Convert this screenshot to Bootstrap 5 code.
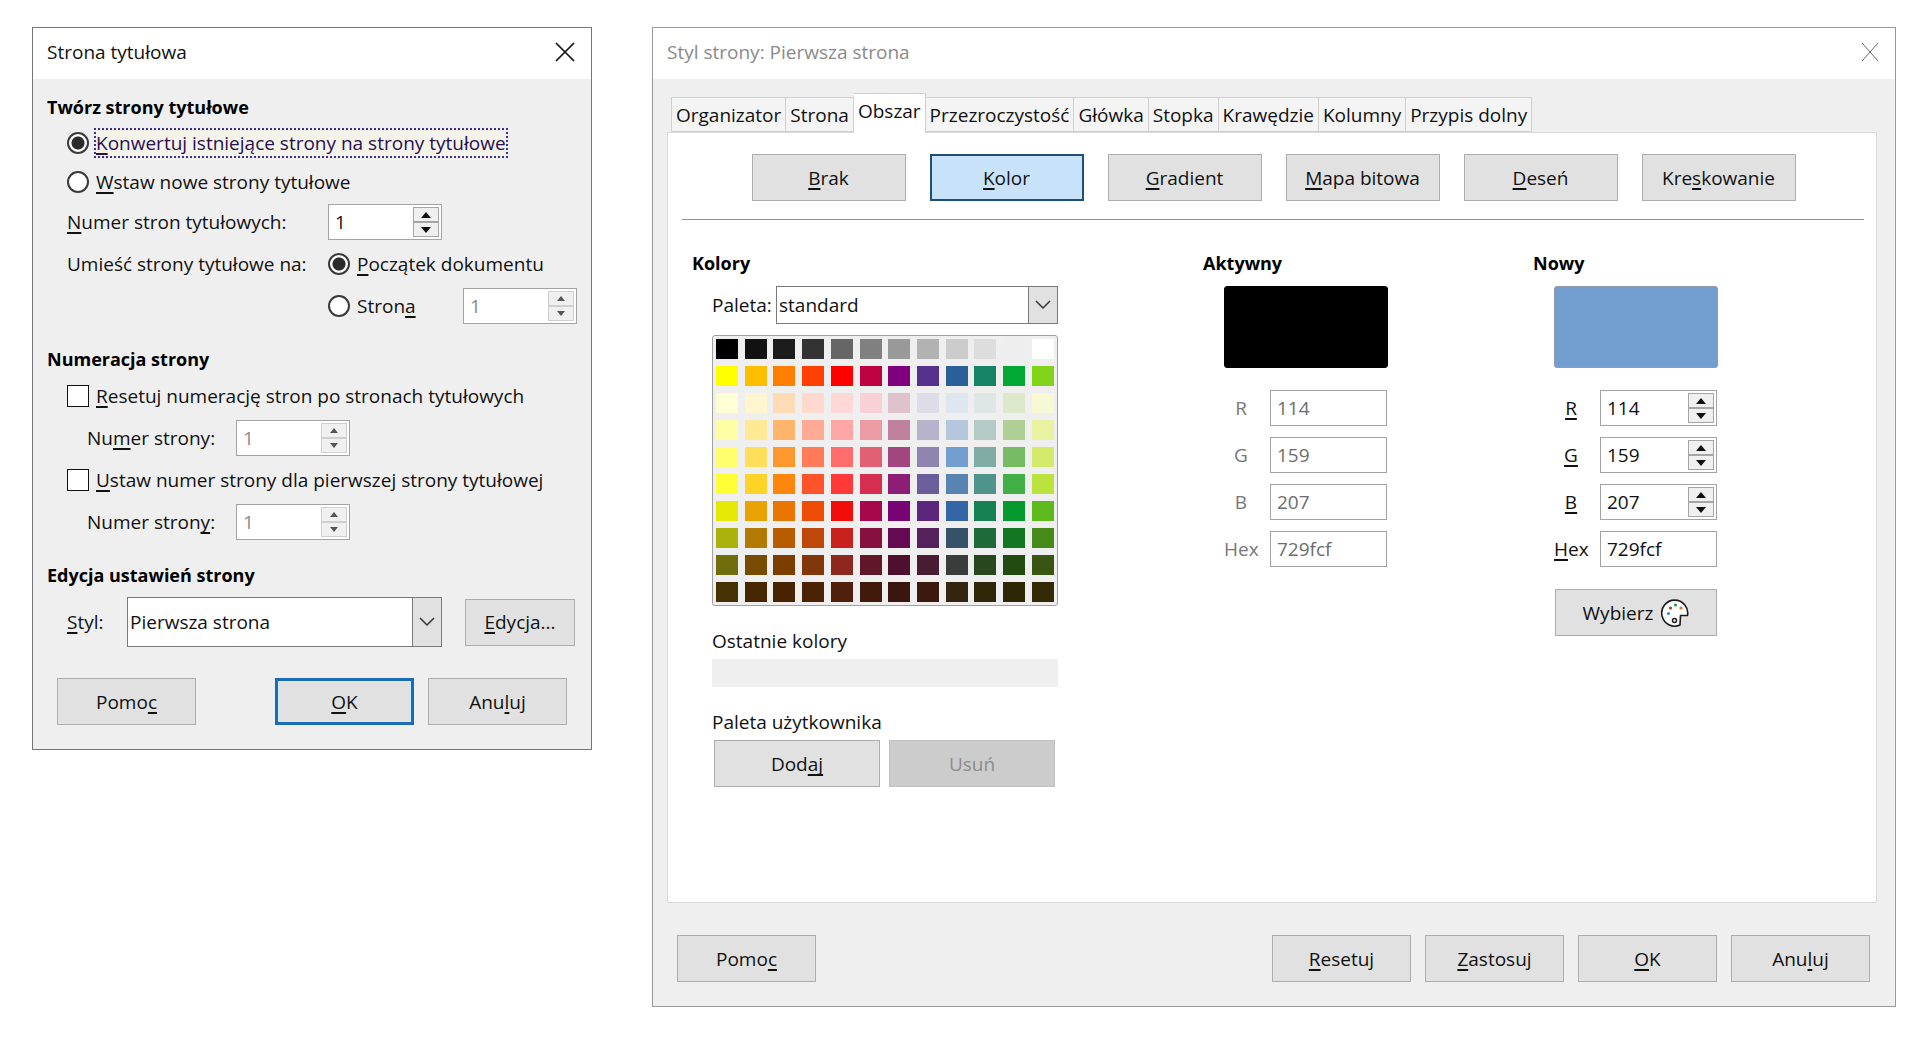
<!DOCTYPE html>
<html lang="pl">
<head>
<meta charset="utf-8">
<meta name="viewport" content="width=device-width, initial-scale=1">
<title>Strona tytułowa</title>
<link href="https://cdn.jsdelivr.net/npm/bootstrap@5.3.0/dist/css/bootstrap.min.css" rel="stylesheet">
<style>
body{background:#fff;color:#111;font-family:"Open Sans","Noto Sans",sans-serif;font-size:19px;line-height:24px}
.desk{padding:27px 24px 28px 32px;gap:60px}
.dlg{background:#efefef;border:1px solid #757575}
.dlg-main{width:560px;flex:none}
.dlg-wide{min-width:0;border-color:#999}
.dlg-title{background:#fff;height:51px;padding:0 16px 3px 14px}
.dlg-title h1{font-size:19px;line-height:24px;font-weight:400;margin:0}
.dlg-wide .dlg-title h1{color:#8a8a8a}
.x-btn{border:0;background:none;padding:0;display:flex;color:#111}
.dlg-wide .x-btn{color:#666}
.sect{font-size:18px;line-height:24px;font-weight:700;color:#000;margin:0}
.dlg-main .sect{line-height:32px}
u{text-decoration-thickness:2px;text-underline-offset:3px;text-decoration-skip-ink:none}
.area{padding:8px 14px 0}
.line{height:42px}
.line-s{height:39px}
.wbtn{height:47px;border:1px solid #adadad;background:#e1e1e1;color:#111;border-radius:0;padding:0;font-size:19px;line-height:24px}
.wbtn:hover{background:#e5f1fb}
.w-std{width:139px}
.w-kind{width:154px}
.w-half{width:166px}
.wbtn.is-default{border:3px solid #1a6cb4;box-shadow:inset 0 0 0 1px #cdeeff}
.wbtn.is-on{background:#c8e3f9;border:2px solid #1f4e79}
.wbtn:disabled{background:#cccccc;border-color:#c0c0c0;color:#8c8c8c;opacity:1}
.tick{appearance:none;width:22px;height:22px;border:1px solid #111;background:#fff;margin:0;flex:none}
.tick[type=radio]{border:2px solid #3a3a3a;border-radius:50%}
.tick[type=radio]:checked{background:radial-gradient(circle,#2b2b2b 0 6px,#fff 7px)}
.opt{gap:7px}
.opt label{line-height:26px}
.focused{outline:2px dotted #3f2f8f;outline-offset:0;background:#f3f3e9;color:#2a1050}
.place-l{width:261px;flex:none}
.spin{height:36px;width:114px;border:1px solid #a3a3a3;background:#fff;padding:2px}
.spin input,.txt{border:0;background:transparent;min-width:0;padding:0 0 0 4px;color:#111;outline:0}
.spin-keys{width:26px;flex:none}
.spin-keys button{flex:1;border:1px solid #a5a5a5;background:#f0f0f0;padding:0;display:flex;align-items:center;justify-content:center;color:#111}
.spin.off input{color:#8a8a8a}
.spin.off .spin-keys button{border-color:#cfcfcf;color:#555}
.txt{height:36px;border:1px solid #a3a3a3;background:#fff;padding-left:6px}
.txt:disabled{color:#6d6d6d}
.combo{position:relative;height:50px}
.combo select{appearance:none;width:100%;height:100%;border:1px solid #7a7a7a;border-radius:0;background:#fff;padding:0 34px 0 2px;color:#111;outline:0}
.combo span{position:absolute;right:0;top:0;bottom:0;width:30px;border:1px solid #7a7a7a;background:#e1e1e1;display:flex;align-items:center;justify-content:center;pointer-events:none}
.combo-low{height:38px}
.num{padding-left:20px}
.num label{width:149px}
.style-row{padding-top:6px}
.style-l{width:60px}
.edit-b{width:110px;margin:0 2px 0 23px}
.foot-main{padding:31px 24px 24px 24px;gap:14px}
.tabs{padding:14px 0 0 18px;height:53px}
.tabs a{height:35px;border:1px solid #cfcfcf;border-left-width:0;background:#f4f4f4;color:#111;text-decoration:none;padding:5px 4px 0 4px;white-space:nowrap}
.tabs a:first-child{border-left-width:1px}
.tabs a.is-open{height:40px;background:#fff;border-bottom:0;margin-bottom:-1px;position:relative}
.pane{margin:0 18px 0 14px;border:1px solid #dadada;background:#fff;height:771px}
.kinds{gap:24px;padding:21px 0 18px 3px}
.rule{margin:0 12px 0 14px;border:0;border-top:1px solid #909090;opacity:1}
.cols{padding:31px 158px 0 24px}
.col-pal{width:366px}
.col-rgb{width:185px}
.inset{padding-left:20px}
.pal-row{margin:11px 0}
.pal-row label{width:64px;flex:none}
.pal{border:1px solid #a0a0a0;border-radius:3px;background:#efefef;padding:3px;display:grid;grid-template-columns:repeat(12,22px);grid-auto-rows:20px;row-gap:7px;justify-content:space-between}
.pal button{border:0;padding:0}
.cap{margin:23px 0 6px}
.recent{height:28px;background:#efefef}
.pair{padding:0 3px 0 2px}
.stack{gap:11px;padding:11px 0 0 21px}
.sample{height:82px;border-radius:3px;border:1px solid #8f9bab;margin-bottom:11px}
.s-old{background:#000;border-color:#000}
.s-new{background:#729fcf}
.rgb{gap:12px}
.rgb label{width:34px;text-align:center;flex:none}
.rgb .spin,.rgb .txt{width:117px;flex:none}
.dim{color:#777}
.pick{margin:11px 1px 0}
.foot-wide{padding:32px 25px 24px 24px;gap:14px}
</style>
</head>
<body>
<main class="desk d-flex align-items-start">

<section class="dlg dlg-main">
  <header class="dlg-title d-flex align-items-center justify-content-between">
    <h1>Strona tytułowa</h1>
    <button class="x-btn" type="button" aria-label="Zamknij"><svg width="20" height="20" viewBox="0 0 20 20" fill="none" stroke="currentColor" stroke-width="1.7"><path d="M1 1l18 18M19 1L1 19"/></svg></button>
  </header>
  <form>
    <div class="area">
      <h2 class="sect mt-1">Twórz strony tytułowe</h2>
      <div class="ps-3 ms-1">
        <div class="line-s opt d-flex align-items-center"><input class="tick" type="radio" name="mode" id="m1" checked><label class="focused" for="m1"><u>K</u>onwertuj istniejące strony na strony tytułowe</label></div>
        <div class="line-s opt d-flex align-items-center"><input class="tick" type="radio" name="mode" id="m2"><label for="m2"><u>W</u>staw nowe strony tytułowe</label></div>
        <div class="line d-flex align-items-center"><label class="place-l" for="n1"><u>N</u>umer stron tytułowych:</label>
          <div class="spin d-flex"><input class="w-100" type="text" id="n1" value="1"><span class="spin-keys d-flex flex-column"><button type="button" aria-label="Więcej"><svg width="10" height="6"><path d="M0 6L5 0l5 6z" fill="currentColor"/></svg></button><button type="button" aria-label="Mniej"><svg width="10" height="6"><path d="M0 0L5 6l5-6z" fill="currentColor"/></svg></button></span></div></div>
        <div class="line d-flex align-items-center"><span class="place-l">Umieść strony tytułowe na:</span>
          <div class="opt d-flex align-items-center"><input class="tick" type="radio" name="where" id="w1" checked><label for="w1"><u>P</u>oczątek dokumentu</label></div></div>
        <div class="line d-flex align-items-center"><span class="place-l"></span>
          <div class="opt d-flex align-items-center flex-fill"><input class="tick" type="radio" name="where" id="w2"><label for="w2">Stron<u>a</u></label></div>
          <div class="spin off d-flex"><input class="w-100" type="text" value="1" aria-label="Strona" disabled><span class="spin-keys d-flex flex-column"><button type="button" disabled aria-label="Więcej"><svg width="8" height="5"><path d="M0 5L4 0l4 5z" fill="currentColor"/></svg></button><button type="button" disabled aria-label="Mniej"><svg width="8" height="5"><path d="M0 0L4 5l4-5z" fill="currentColor"/></svg></button></span></div></div>
      </div>
      <h2 class="sect mt-3">Numeracja strony</h2>
      <div class="ps-3 ms-1">
        <div class="line opt d-flex align-items-center"><input class="tick" type="checkbox" id="c1"><label for="c1"><u>R</u>esetuj numerację stron po stronach tytułowych</label></div>
        <div class="line num d-flex align-items-center"><label for="p1">Nu<u>m</u>er strony:</label>
          <div class="spin off d-flex"><input class="w-100" type="text" id="p1" value="1" disabled><span class="spin-keys d-flex flex-column"><button type="button" disabled aria-label="Więcej"><svg width="8" height="5"><path d="M0 5L4 0l4 5z" fill="currentColor"/></svg></button><button type="button" disabled aria-label="Mniej"><svg width="8" height="5"><path d="M0 0L4 5l4-5z" fill="currentColor"/></svg></button></span></div></div>
        <div class="line opt d-flex align-items-center"><input class="tick" type="checkbox" id="c2"><label for="c2"><u>U</u>staw numer strony dla pierwszej strony tytułowej</label></div>
        <div class="line num d-flex align-items-center"><label for="p2">Numer stron<u>y</u>:</label>
          <div class="spin off d-flex"><input class="w-100" type="text" id="p2" value="1" disabled><span class="spin-keys d-flex flex-column"><button type="button" disabled aria-label="Więcej"><svg width="8" height="5"><path d="M0 5L4 0l4 5z" fill="currentColor"/></svg></button><button type="button" disabled aria-label="Mniej"><svg width="8" height="5"><path d="M0 0L4 5l4-5z" fill="currentColor"/></svg></button></span></div></div>
      </div>
      <h2 class="sect mt-3">Edycja ustawień strony</h2>
      <div class="style-row ps-3 ms-1 d-flex align-items-center">
        <label class="style-l" for="st"><u>S</u>tyl:</label>
        <div class="combo flex-fill"><select id="st"><option>Pierwsza strona</option></select><span><svg width="16" height="10" fill="none" stroke="#333" stroke-width="1.5"><path d="M1 1l7 7 7-7"/></svg></span></div>
        <button class="wbtn edit-b" type="button"><u>E</u>dycja...</button>
      </div>
    </div>
    <div class="foot-main d-flex">
      <button class="wbtn w-std me-auto" type="button">Pomo<u>c</u></button>
      <button class="wbtn w-std is-default" type="button"><u>O</u>K</button>
      <button class="wbtn w-std" type="button">Anu<u>l</u>uj</button>
    </div>
  </form>
</section>

<section class="dlg dlg-wide flex-fill">
  <header class="dlg-title d-flex align-items-center justify-content-between">
    <h1>Styl strony: Pierwsza strona</h1>
    <button class="x-btn" type="button" aria-label="Zamknij"><svg width="18" height="20" viewBox="0 0 18 20" fill="none" stroke="currentColor"><path d="M1 1l16 18M17 1L1 19"/></svg></button>
  </header>
  <nav class="tabs d-flex align-items-end">
    <a href="#">Organizator</a><a href="#">Strona</a><a href="#" class="is-open" aria-current="page">Obszar</a><a href="#">Przezroczystość</a><a href="#">Główka</a><a href="#">Stopka</a><a href="#">Krawędzie</a><a href="#">Kolumny</a><a href="#">Przypis dolny</a>
  </nav>
  <div class="pane">
    <div class="kinds d-flex justify-content-center">
      <button class="wbtn w-kind" type="button"><u>B</u>rak</button>
      <button class="wbtn w-kind is-on" type="button"><u>K</u>olor</button>
      <button class="wbtn w-kind" type="button"><u>G</u>radient</button>
      <button class="wbtn w-kind" type="button"><u>M</u>apa bitowa</button>
      <button class="wbtn w-kind" type="button"><u>D</u>eseń</button>
      <button class="wbtn w-kind" type="button">Kre<u>s</u>kowanie</button>
    </div>
    <hr class="rule">
    <div class="cols d-flex justify-content-between align-items-start">
      <div class="col-pal">
        <h2 class="sect">Kolory</h2>
        <div class="inset">
          <div class="pal-row d-flex align-items-center"><label for="pl">Paleta:</label>
            <div class="combo combo-low flex-fill"><select id="pl"><option>standard</option></select><span><svg width="16" height="10" fill="none" stroke="#333" stroke-width="1.5"><path d="M1 1l7 7 7-7"/></svg></span></div></div>
          <div class="pal" id="pal"></div>
          <div class="cap">Ostatnie kolory</div>
          <div class="recent"></div>
          <div class="cap">Paleta użytkownika</div>
          <div class="d-flex justify-content-between pair">
            <button class="wbtn w-half" type="button">Dod<u>aj</u></button>
            <button class="wbtn w-half" type="button" disabled>Usuń</button>
          </div>
        </div>
      </div>
      <div class="col-rgb">
        <h2 class="sect">Aktywny</h2>
        <div class="d-flex flex-column stack">
          <div class="sample s-old"></div>
          <div class="rgb d-flex align-items-center"><label class="dim" for="ar">R</label><input class="txt" id="ar" value="114" disabled></div>
          <div class="rgb d-flex align-items-center"><label class="dim" for="ag">G</label><input class="txt" id="ag" value="159" disabled></div>
          <div class="rgb d-flex align-items-center"><label class="dim" for="ab">B</label><input class="txt" id="ab" value="207" disabled></div>
          <div class="rgb d-flex align-items-center"><label class="dim" for="ah">Hex</label><input class="txt" id="ah" value="729fcf" disabled></div>
        </div>
      </div>
      <div class="col-rgb">
        <h2 class="sect">Nowy</h2>
        <div class="d-flex flex-column stack">
          <div class="sample s-new"></div>
          <div class="rgb d-flex align-items-center"><label for="nr"><u>R</u></label><div class="spin d-flex"><input class="w-100" type="text" id="nr" value="114"><span class="spin-keys d-flex flex-column"><button type="button" aria-label="Więcej"><svg width="10" height="6"><path d="M0 6L5 0l5 6z" fill="currentColor"/></svg></button><button type="button" aria-label="Mniej"><svg width="10" height="6"><path d="M0 0L5 6l5-6z" fill="currentColor"/></svg></button></span></div></div>
          <div class="rgb d-flex align-items-center"><label for="ng"><u>G</u></label><div class="spin d-flex"><input class="w-100" type="text" id="ng" value="159"><span class="spin-keys d-flex flex-column"><button type="button" aria-label="Więcej"><svg width="10" height="6"><path d="M0 6L5 0l5 6z" fill="currentColor"/></svg></button><button type="button" aria-label="Mniej"><svg width="10" height="6"><path d="M0 0L5 6l5-6z" fill="currentColor"/></svg></button></span></div></div>
          <div class="rgb d-flex align-items-center"><label for="nb"><u>B</u></label><div class="spin d-flex"><input class="w-100" type="text" id="nb" value="207"><span class="spin-keys d-flex flex-column"><button type="button" aria-label="Więcej"><svg width="10" height="6"><path d="M0 6L5 0l5 6z" fill="currentColor"/></svg></button><button type="button" aria-label="Mniej"><svg width="10" height="6"><path d="M0 0L5 6l5-6z" fill="currentColor"/></svg></button></span></div></div>
          <div class="rgb d-flex align-items-center"><label for="nh"><u>H</u>ex</label><input class="txt" id="nh" value="729fcf"></div>
          <button class="wbtn pick d-flex align-items-center justify-content-center gap-2" type="button">Wybierz
            <svg width="28" height="28" viewBox="0 0 28 28"><path d="M19 26A13 13 0 1 1 26.500 16.500H19.500Z" fill="#fcfcfc" stroke="#1c1c1c" stroke-width="1.600" stroke-linejoin="round"/><circle cx="7.500" cy="14.500" r="1.600" fill="#3d85d8"/><circle cx="9.500" cy="9" r="1.600" fill="#b8352c"/><circle cx="14.500" cy="6" r="1.600" fill="#2f9950"/><circle cx="20" cy="9" r="1.600" fill="#dd7146"/><circle cx="13.500" cy="21.500" r="2" fill="none" stroke="#1c1c1c" stroke-width="1.500"/></svg></button>
        </div>
      </div>
    </div>
  </div>
  <footer class="foot-wide d-flex">
    <button class="wbtn w-std me-auto" type="button">Pomo<u>c</u></button>
    <button class="wbtn w-std" type="button"><u>R</u>esetuj</button>
    <button class="wbtn w-std" type="button"><u>Z</u>astosuj</button>
    <button class="wbtn w-std" type="button"><u>O</u>K</button>
    <button class="wbtn w-std" type="button">Anu<u>l</u>uj</button>
  </footer>
</section>
</main>
<script>
const rows = [
 "000000 111111 1C1C1C 333333 666666 808080 999999 B2B2B2 CCCCCC DDDDDD EEEEEE FFFFFF",
 "FFFF00 FFBF00 FF8000 FF4000 FF0000 BF0041 800080 55308D 2A6099 158466 00A933 81D41A",
 "FFFFD7 FFF5CE FFDBB6 FFD8CE FFD7D7 F7D1D5 E0C2CD DEDCE6 DEE6EF DEE7E5 DDE8CB F6F9D4",
 "FFFFA6 FFE994 FFB66C FFAA95 FFA6A6 EC9BA4 BF819E B7B3CA B4C7DC B3CAC7 AFD095 E8F2A1",
 "FFFF6D FFDE59 FF972F FF7B59 FF6D6D E16173 A1467E 8E86AE 729FCF 81ACA6 77BC65 D4EA6B",
 "FFFF38 FFD428 FF860D FF5429 FF3838 D62E4E 8D1D75 6B5E9B 5983B0 50938A 3FAF46 BBE33D",
 "E6E905 E8A202 EA7500 ED4C05 F10D0C A7074B 780373 5B277D 3465A4 168253 069A2E 5EB91E",
 "ACB20C B47804 B85C00 BE480A C9211E 861141 650953 55215B 355269 1E6A39 127622 468A1A",
 "706E0C 784B04 7B3D00 813709 8D281E 611729 4E102D 481D32 383D3C 28471F 224B12 395511",
 "443205 472702 492300 4B2204 50200C 41190D 3B160E 3A1A0F 362413 302709 2E2706 342A06"];
const pal = document.getElementById("pal");
rows.join(" ").split(" ").forEach(c => {
  const b = document.createElement("button");
  b.type = "button";
  b.setAttribute("aria-label", "#" + c);
  b.style.backgroundColor = "#" + c;
  pal.append(b);
});
</script>
<script src="https://cdn.jsdelivr.net/npm/bootstrap@5.3.0/dist/js/bootstrap.bundle.min.js"></script>
</body>
</html>
